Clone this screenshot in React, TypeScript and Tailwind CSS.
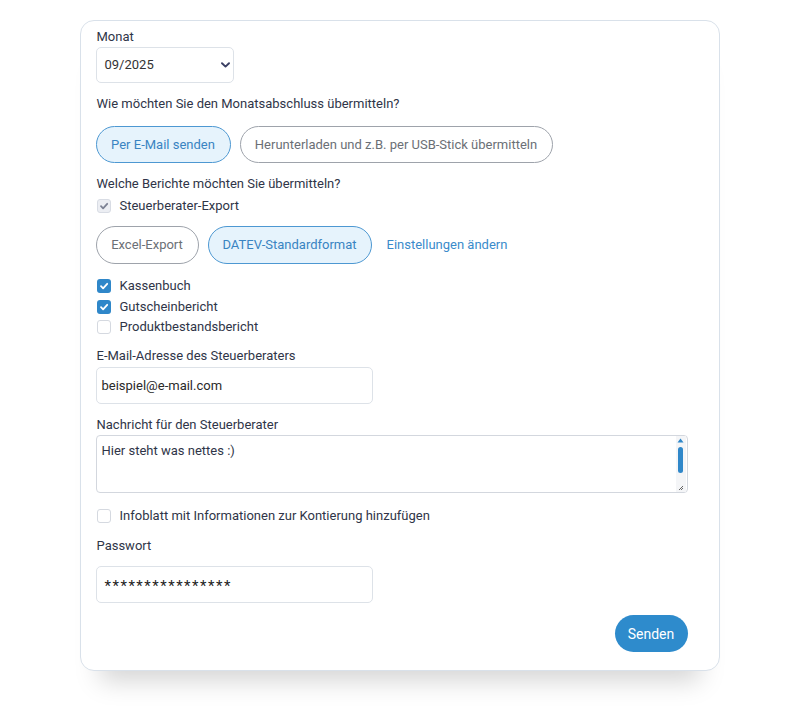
import React from "react";

const Check = ({ color = "white" }: { color?: string }) => (
  <svg width="10" height="10" viewBox="0 0 10 10" fill="none">
    <path d="M2 5.2 L4.1 7.3 L8.2 2.8" stroke={color} strokeWidth="1.8" strokeLinecap="round" strokeLinejoin="round" />
  </svg>
);

const Box = ({ state }: { state: "on" | "off" | "disabled" }) => {
  if (state === "on")
    return (
      <span className="flex h-[14px] w-[14px] items-center justify-center rounded-[3px] bg-[#2f87c9]">
        <Check />
      </span>
    );
  if (state === "disabled")
    return (
      <span className="flex h-[14px] w-[14px] items-center justify-center rounded-[3px] border border-[#d8dce4] bg-[#eceef3]">
        <Check color="#7d8294" />
      </span>
    );
  return <span className="h-[14px] w-[14px] rounded-[3px] border border-[#d5d9e0] bg-white" />;
};

const CheckRow = ({ state, label, cls = "" }: { state: "on" | "off" | "disabled"; label: string; cls?: string }) => (
  <div className={"flex h-5 items-center gap-[9px] pl-[1px] " + cls}>
    <Box state={state} />
    <span>{label}</span>
  </div>
);

export default function App() {
  return (
    <div className="min-h-[715px] w-[799px] bg-white pt-5" style={{ fontFamily: "Roboto, 'Liberation Sans', sans-serif" }}>
      <div className="mx-auto w-[640px] rounded-[14px] border border-[#d9e1ea] bg-white px-[15px] pb-[18px] pt-[6px] text-[13px] leading-5 text-[#2f3548] shadow-[0_30px_24px_-20px_rgba(0,0,0,0.17)]">
        <div className="pl-[1px]">Monat</div>
        <div className="flex h-[36px] w-[138px] items-center justify-between rounded-[5px] border border-[#dde2e8] pl-[8px] pr-[3px] text-[#333]">
          <span>09/2025</span>
          <svg width="9" height="6" viewBox="0 0 9 6" fill="none">
            <path d="M1 1.2 L4.5 4.6 L8 1.2" stroke="#3a3f63" strokeWidth="1.9" strokeLinecap="round" strokeLinejoin="round" />
          </svg>
        </div>
        <div className="mt-[11px] pl-[1px]">Wie möchten Sie den Monatsabschluss übermitteln?</div>
        <div className="mt-3 flex gap-[9px]">
          <div className="flex h-[37px] w-[135px] items-center justify-center rounded-full border border-[#4d98d2] bg-[#e6f3fc] text-[#3984c2]">
            Per E-Mail senden
          </div>
          <div className="flex h-[37px] w-[313px] items-center justify-center rounded-full border border-[#9ea3ab] bg-white text-[#6b6f76]">
            Herunterladen und z.B. per USB-Stick übermitteln
          </div>
        </div>
        <div className="mt-[11px] pl-[1px]">Welche Berichte möchten Sie übermitteln?</div>
        <CheckRow state="disabled" label="Steuerberater-Export" cls="mt-[2px]" />
        <div className="mt-[10px] flex items-center">
          <div className="flex h-[38px] w-[103px] items-center justify-center rounded-full border border-[#9ea3ab] bg-white text-[#6b6f76]">
            Excel-Export
          </div>
          <div className="ml-[9px] flex h-[38px] w-[164px] items-center justify-center rounded-full border border-[#4d98d2] bg-[#e6f3fc] text-[#3984c2]">
            DATEV-Standardformat
          </div>
          <span className="ml-[15px] text-[#3a8bcb]">Einstellungen ändern</span>
        </div>
        <div className="mt-[12px] flex flex-col gap-[0.5px]">
          <CheckRow state="on" label="Kassenbuch" />
          <CheckRow state="on" label="Gutscheinbericht" />
          <CheckRow state="off" label="Produktbestandsbericht" />
        </div>
        <div className="mt-[9px] pl-[1px]">E-Mail-Adresse des Steuerberaters</div>
        <div className="mt-[1px] flex h-[37px] w-[277px] items-center rounded-[5px] border border-[#dde2e8] px-[5px] text-[#2a2a2a]">
          beispiel@e-mail.com
        </div>
        <div className="mt-[11px] pl-[1px]">Nachricht für den Steuerberater</div>
        <div className="flex h-[58px] w-[592px] rounded-[4px] border border-[#d3d7de]">
          <div className="flex-1 px-[5px] pt-[5px] text-[#2f3548]">Hier steht was nettes :)</div>
          <div className="mr-[1px] flex w-[10px] flex-col items-center bg-[#f4f5f7] pb-[1px] pt-[2px]">
            <svg width="7" height="5" viewBox="0 0 7 5">
              <path d="M3.5 0.5 L6.5 4.5 L0.5 4.5 Z" fill="#2f87c9" />
            </svg>
            <div className="mt-[4px] h-[26px] w-[5px] rounded-full bg-[#2f87c9]" />
            <div className="flex-1" />
            <svg width="6" height="6" viewBox="0 0 6 6">
              <path d="M1 5 L5 1 M3 5 L5 3" stroke="#666" strokeWidth="1" />
            </svg>
          </div>
        </div>
        <CheckRow state="off" label="Infoblatt mit Informationen zur Kontierung hinzufügen" cls="mt-[13px]" />
        <div className="mt-[10px] pl-[1px]">Passwort</div>
        <div className="mt-[10px] flex h-[37px] w-[277px] items-center rounded-[5px] border border-[#dde2e8] pl-[8px] pt-[3px] text-[15px] tracking-[1.5px] text-[#222]">
          ****************
        </div>
        <div className="mt-[12px] flex justify-end pr-[16px]">
          <div className="flex h-[37px] w-[73px] items-center justify-center rounded-full bg-[#2e8bcc] text-[14px] text-white">
            Senden
          </div>
        </div>
      </div>
    </div>
  );
}
